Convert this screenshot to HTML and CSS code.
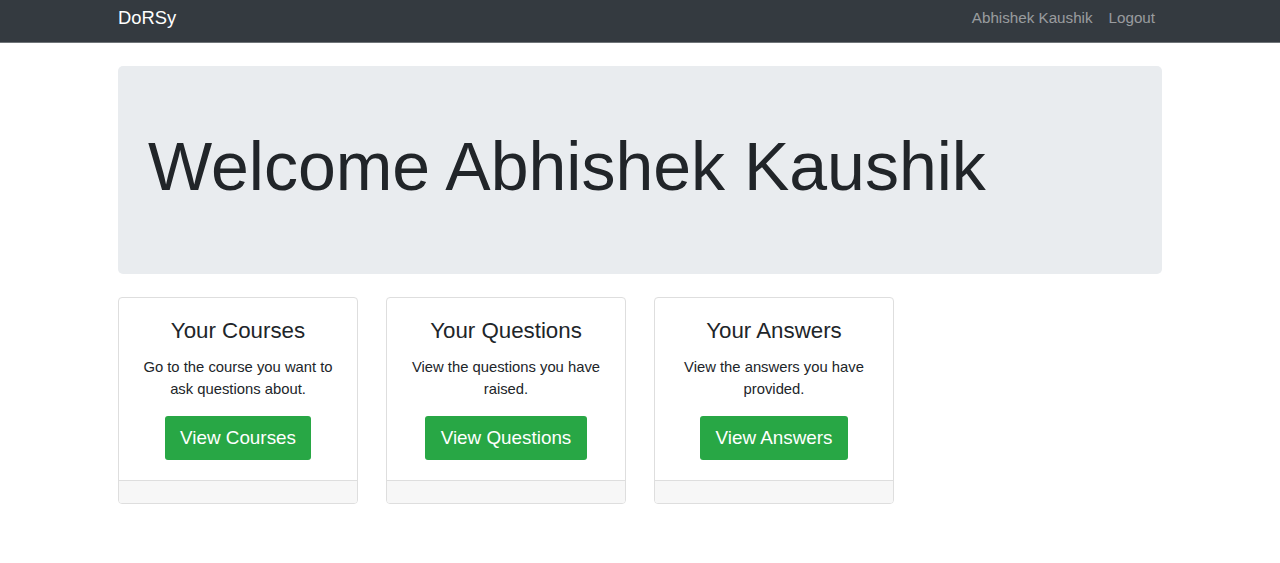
FILE: index.html
```html
<!DOCTYPE html>
<html lang="en">
<head>
<meta charset="utf-8">
<title>DoRSy</title>
<link rel="stylesheet" href="styles.css">
</head>
<body>
<nav class="navbar">
  <div class="container nav-inner">
    <a class="brand" href="#">DoRSy</a>
    <div class="nav-links">
      <a class="nav-link" href="#">Abhishek Kaushik</a>
      <a class="nav-link" href="#">Logout</a>
    </div>
  </div>
</nav>
<main class="container">
  <section class="jumbotron">
    <h1 class="display">Welcome Abhishek Kaushik</h1>
  </section>
  <div class="cards">
    <div class="card">
      <div class="card-body">
        <h3 class="card-title">Your Courses</h3>
        <p class="card-text">Go to the course you want to ask questions about.</p>
        <a class="btn" href="#">View Courses</a>
      </div>
      <div class="card-footer"></div>
    </div>
    <div class="card">
      <div class="card-body">
        <h3 class="card-title">Your Questions</h3>
        <p class="card-text">View the questions you have raised.</p>
        <a class="btn" href="#">View Questions</a>
      </div>
      <div class="card-footer"></div>
    </div>
    <div class="card">
      <div class="card-body">
        <h3 class="card-title">Your Answers</h3>
        <p class="card-text">View the answers you have provided.</p>
        <a class="btn" href="#">View Answers</a>
      </div>
      <div class="card-footer"></div>
    </div>
  </div>
</main>
</body>
</html>
```
FILE: styles.css
```css
* { box-sizing: border-box; }
html, body { margin: 0; padding: 0; }
body {
  font-family: "Liberation Sans", Arial, sans-serif;
  color: #212529;
  background: #fff;
}
a { text-decoration: none; }
.container {
  width: 1044px;
  margin: 0 auto;
}
.navbar {
  background: #343a40;
  height: 43px;
  border-bottom: 1px solid #6f7478;
}
.nav-inner {
  height: 42px;
  display: flex;
  align-items: center;
  justify-content: space-between;
}
.brand {
  color: #fff;
  font-size: 18.4px;
  line-height: 24px;
  margin-top: -6px;
}
.nav-links {
  display: flex;
  margin-right: 7px;
  margin-top: -6px;
}
.nav-link {
  color: rgba(255,255,255,.5);
  font-size: 15.2px;
  line-height: 22px;
  padding-left: 16px;
}
.jumbotron {
  margin-top: 23px;
  height: 208px;
  background: #e9ecef;
  border-radius: 5px;
  padding: 0 30px 7px;
  display: flex;
  align-items: center;
}
.display {
  margin: 0;
  font-weight: 400;
  font-size: 68px;
  line-height: 1.2;
}
.cards {
  display: flex;
  gap: 28px;
  margin-top: 23px;
}
.card {
  width: 240px;
  border: 1px solid #dedede;
  border-radius: 4px;
  display: flex;
  flex-direction: column;
  overflow: hidden;
}
.card-body {
  padding: 19px 18px 20px;
  text-align: center;
  display: flex;
  flex-direction: column;
  align-items: center;
}
.card-title {
  margin: 0;
  font-weight: 400;
  font-size: 22.3px;
  line-height: 28px;
}
.card-text {
  margin: 11px 0 16px;
  font-size: 14.8px;
  line-height: 22px;
}
.btn {
  display: inline-block;
  background: #28a745;
  color: #fff;
  font-size: 18.85px;
  line-height: 44px;
  height: 44px;
  padding: 0 15.5px;
  border-radius: 3px;
}
.card-footer {
  height: 23px;
  background: #f7f7f7;
  border-top: 1px solid #dedede;
}
```
